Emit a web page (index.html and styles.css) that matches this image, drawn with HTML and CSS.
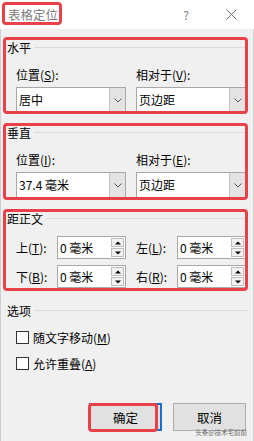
FILE: index.html
```html
<!DOCTYPE html>
<html lang="zh-CN">
<head>
<meta charset="utf-8">
<title>表格定位</title>
<link rel="stylesheet" href="styles.css">
</head>
<body>
<div class="dialog">
  <div class="titlebar">
    <span class="title">表格定位</span>
    <span class="help">?</span>
    <span class="close"><svg width="11" height="11" viewBox="0 0 11 11"><path d="M0.5 0.5 L10.5 10.5 M10.5 0.5 L0.5 10.5" stroke="#6a6a6a" stroke-width="1" fill="none"/></svg></span>
  </div>

  <section class="group g1">
    <div class="group-title"><span>水平</span></div>
    <div class="pair labels"><label>位置(<u>S</u>):</label><label>相对于(<u>V</u>):</label></div>
    <div class="pair controls">
      <div class="combo"><span class="val">居中</span><span class="arrow"><svg width="8" height="5" viewBox="0 0 8 5"><path d="M0.5 0.5 L4 4 L7.5 0.5" stroke="#555" fill="none"/></svg></span></div>
      <div class="combo"><span class="val">页边距</span><span class="arrow"><svg width="8" height="5" viewBox="0 0 8 5"><path d="M0.5 0.5 L4 4 L7.5 0.5" stroke="#555" fill="none"/></svg></span></div>
    </div>
  </section>

  <section class="group g2">
    <div class="group-title"><span>垂直</span></div>
    <div class="pair labels"><label>位置(<u>I</u>):</label><label>相对于(<u>E</u>):</label></div>
    <div class="pair controls">
      <div class="combo"><span class="val">37.4 毫米</span><span class="arrow"><svg width="8" height="5" viewBox="0 0 8 5"><path d="M0.5 0.5 L4 4 L7.5 0.5" stroke="#555" fill="none"/></svg></span></div>
      <div class="combo"><span class="val">页边距</span><span class="arrow"><svg width="8" height="5" viewBox="0 0 8 5"><path d="M0.5 0.5 L4 4 L7.5 0.5" stroke="#555" fill="none"/></svg></span></div>
    </div>
  </section>

  <section class="group g3">
    <div class="group-title"><span>距正文</span></div>
    <div class="spin-row first">
      <div class="field"><label>上(<u>T</u>):</label><div class="spin"><span class="val">0 毫米</span><span class="btns"><i class="up"></i><i class="down"></i></span></div></div>
      <div class="field"><label>左(<u>L</u>):</label><div class="spin"><span class="val">0 毫米</span><span class="btns"><i class="up"></i><i class="down"></i></span></div></div>
    </div>
    <div class="spin-row">
      <div class="field"><label>下(<u>B</u>):</label><div class="spin"><span class="val">0 毫米</span><span class="btns"><i class="up"></i><i class="down"></i></span></div></div>
      <div class="field"><label>右(<u>R</u>):</label><div class="spin"><span class="val">0 毫米</span><span class="btns"><i class="up"></i><i class="down"></i></span></div></div>
    </div>
  </section>

  <section class="options">
    <div class="group-title"><span>选项</span></div>
    <div class="check first"><span class="box"></span><span>随文字移动(<u>M</u>)</span></div>
    <div class="check"><span class="box"></span><span>允许重叠(<u>A</u>)</span></div>
  </section>

  <div class="buttons">
    <button class="btn ok">确定</button>
    <button class="btn">取消</button>
  </div>
  <span class="watermark">头条@技术宅前前</span>
</div>
</body>
</html>
```

FILE: styles.css
```css
* { box-sizing: border-box; }
html, body { margin: 0; padding: 0; }
body {
  width: 254px;
  height: 441px;
  overflow: hidden;
  font-family: "Noto Sans CJK SC", "Noto Sans", sans-serif;
  font-size: 12px;
  color: #000;
}
.dialog {
  position: relative;
  width: 254px;
  height: 441px;
  background: #f0f0f0;
  border-left: 1px solid #cfcfcf;
  border-right: 1px solid #cfcfcf;
}
.titlebar {
  height: 29px;
  background: #fff;
  display: flex;
  align-items: center;
  margin: 0 -1px;
}
.title {
  position: relative;
  margin-left: 8px;
  font-size: 12.5px;
  line-height: 16px;
  color: #7c7c7c;
  margin-top: 0;
}
.title::after {
  content: "";
  position: absolute;
  left: -6px; right: -4px; top: -5px; bottom: -2px;
  border: 3px solid #e8414a;
  border-radius: 4px;
}
.help {
  margin-left: auto;
  width: 20px;
  text-align: center;
  color: #7a7a7a;
  font-size: 12px;
  line-height: 14px;
}
.close {
  width: 20px;
  margin-left: 25px;
  margin-right: 13px;
  display: flex;
  justify-content: center;
}
.close svg { display: block; }

.group, .options { position: relative; margin-left: -1px; margin-right: -1px; }
.group::after {
  content: "";
  position: absolute;
  left: 3px; right: 6px;
  border: 3px solid #e8414a;
  border-radius: 4px;
  pointer-events: none;
}
.g1 { margin-top: 11px; }
.g1::after { top: -3px; bottom: -1px; }
.g2 { margin-top: 12px; }
.g2::after { top: -2px; bottom: -2px; }
.g3 { margin-top: 13px; }
.g3::after { top: -2px; bottom: -3px; }
.options { margin-top: 15px; }

.group-title {
  height: 15px;
  display: flex;
  align-items: center;
  padding-left: 7px;
  padding-right: 7px;
  line-height: 15px;
}
.group-title::after {
  content: "";
  flex: 1;
  height: 1px;
  background: #dadada;
  margin-left: 3px;
}

.pair {
  display: grid;
  grid-template-columns: 110px 110px;
  column-gap: 10px;
  padding-left: 16px;
}
.labels { margin-top: 13px; line-height: 14px; }
.controls { margin-top: 5px; }
.combo {
  height: 26px;
  background: #fff;
  border: 1px solid #a8a8a8;
  display: flex;
  align-items: center;
}
.combo .val { flex: 1; padding-left: 2px; line-height: 16px; }
.combo .arrow {
  width: 16px;
  align-self: stretch;
  background: #e3e3e3;
  border-left: 1px solid #c4c4c4;
  display: flex;
  align-items: center;
  justify-content: center;
}
.combo .arrow svg { display: block; }

.spin-row {
  display: flex;
  gap: 10px;
  padding-left: 16px;
  margin-top: 6px;
}
.spin-row.first { margin-top: 10px; }
.field { width: 110px; display: flex; align-items: center; }
.field label { width: 41px; line-height: 14px; }
.field .spin { flex: 1; }
.spin {
  height: 23px;
  background: #fff;
  border: 1px solid #a8a8a8;
  display: flex;
  align-items: stretch;
}
.spin .val { flex: 1; padding-left: 2px; line-height: 21px; }
.spin .btns {
  width: 15px;
  display: flex;
  flex-direction: column;
  padding: 1px;
  gap: 1px;
}
.spin .btns i {
  flex: 1;
  background: #f2f2f2;
  border: 1px solid #bdbdbd;
  position: relative;
}
.spin .btns i::before {
  content: "";
  position: absolute;
  left: 50%;
  top: 50%;
  width: 0; height: 0;
  border-left: 3px solid transparent;
  border-right: 3px solid transparent;
  transform: translate(-50%, -50%);
}
.spin .btns .up::before { border-bottom: 3px solid #000; }
.spin .btns .down::before { border-top: 3px solid #000; }

.check {
  display: flex;
  align-items: center;
  padding-left: 16px;
  height: 15px;
  margin-top: 11px;
  line-height: 15px;
}
.check.first { margin-top: 12px; }
.check .box {
  width: 13px;
  height: 13px;
  border: 1px solid #333;
  background: #fff;
  margin-right: 4px;
}

.buttons {
  display: flex;
  justify-content: flex-end;
  gap: 11px;
  margin-top: 32px;
  padding-right: 7px;
}
.btn {
  position: relative;
  width: 73px;
  height: 28px;
  background: #e1e1e1;
  border: 1px solid #adadad;
  font-family: "Noto Sans CJK SC", "Noto Sans", sans-serif;
  font-size: 12.5px;
  color: #000;
  padding: 0;
}
.btn.ok { border: 2px solid #1a6fd0; }
.btn.ok::after {
  content: "";
  position: absolute;
  left: -3px; right: 2px; top: -2px; bottom: -3px;
  border: 3px solid #e8414a;
  border-radius: 4px;
}
.watermark {
  position: absolute;
  right: 6px;
  bottom: 5px;
  font-size: 6.5px;
  line-height: 8px;
  color: #6a6a6a;
}
```
